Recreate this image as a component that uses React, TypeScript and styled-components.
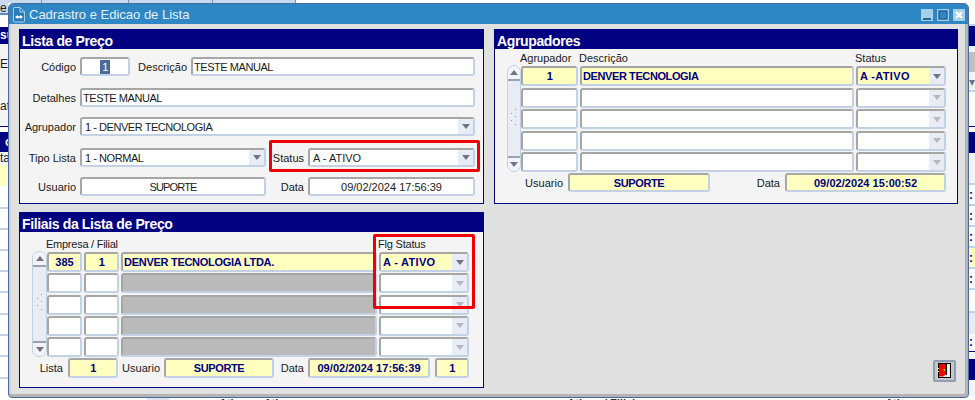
import React from "react";
import styled, { createGlobalStyle } from "styled-components";

const Global = createGlobalStyle`
  html, body { margin: 0; padding: 0; background: #fff; }
  * { box-sizing: border-box; }
`;

const Desktop = styled.div`
  position: relative;
  width: 975px;
  height: 400px;
  overflow: hidden;
  display: flex;
  flex-direction: column;
  background: #fff;
  font-family: "Liberation Sans", Arial, sans-serif;
  font-size: 11px;
  color: #1a1a1a;
`;
const TopTabs = styled.div`
  height: 3px;
  display: flex;
  flex: none;
`;
const TopTab = styled.div<{ $w: number }>`
  width: ${(p) => p.$w}px;
  background: #c8daf0;
  border-right: 1px solid #7f8fa5;
`;
const Middle = styled.div`
  flex: 1;
  display: flex;
  justify-content: space-between;
  min-height: 0;
`;
const Strip = styled.div<{ $w: number }>`
  width: ${(p) => p.$w}px;
  overflow: hidden;
  display: flex;
  flex-direction: column;
`;
const Band = styled.div<{ $h: number; $bg?: string; $c?: string; $bold?: boolean; $line?: boolean; $pad?: number }>`
  flex: none;
  height: ${(p) => p.$h}px;
  background: ${(p) => p.$bg || "#fff"};
  color: ${(p) => p.$c || "#1a1a1a"};
  font-weight: ${(p) => (p.$bold ? 700 : 400)};
  font-size: 12px;
  line-height: ${(p) => p.$h}px;
  white-space: nowrap;
  overflow: hidden;
  padding-left: ${(p) => p.$pad || 0}px;
  border-bottom: ${(p) => (p.$line ? "2px solid #c3d3e6" : "none")};
`;
const StripText = styled.div<{ $mt: number }>`
  margin-top: ${(p) => p.$mt}px;
  line-height: 14px;
`;
const BottomRow = styled.div`
  height: 3px;
  flex: none;
  overflow: hidden;
  display: flex;
  background: #fff;
`;
const BottomCell = styled.span`
  margin-left: 147px;
  width: 22px;
  background: #dce6f2;
`;
const BottomBit = styled.span<{ $ml: number }>`
  margin-left: ${(p) => p.$ml}px;
  font-size: 11px;
  line-height: 13px;
  font-weight: 700;
  white-space: nowrap;
  color: #333;
`;

const Win = styled.div`
  position: absolute;
  left: 8px;
  top: 3px;
  width: 961px;
  height: 395px;
  background: #e0e0e0;
  border: 1px solid #4a6a9c;
  border-radius: 5px 5px 4px 4px;
  box-shadow: inset -3px -3px 0 #b4b4b4, inset 2px 0 0 #cfcfcf;
  display: flex;
  flex-direction: column;
`;
const TitleBar = styled.div`
  height: 20px;
  flex: none;
  background: #2e86c5;
  border-radius: 4px 4px 0 0;
  display: flex;
  align-items: center;
  padding: 0 3px 0 3px;
  color: #e6f0f8;
  font-size: 13px;
`;
const TitleText = styled.span`
  margin-left: 3px;
  flex: 1;
`;
const WinBtns = styled.div`
  display: flex;
  gap: 4px;
  margin-top: 2px;
`;
const WinBtn = styled.div`
  width: 12px;
  height: 12px;
  background: #a6cfea;
`;
const Content = styled.div`
  flex: 1;
  display: grid;
  grid-template-columns: 465px 464px;
  column-gap: 10px;
  padding: 5px 0 0 10px;
  align-items: start;
`;
const Col = styled.div`
  display: flex;
  flex-direction: column;
  gap: 8px;
`;
const RightCol = styled(Col)`
  height: 358px;
  gap: 0;
`;
const Panel = styled.section<{ $h: number }>`
  position: relative;
  height: ${(p) => p.$h}px;
  flex: none;
  border: 1px solid #000080;
  background: #f4f4f4;
  display: flex;
  flex-direction: column;
`;
const PanelTitle = styled.h2`
  margin: 0;
  height: 19px;
  flex: none;
  background: #000080;
  color: #fff;
  font-size: 14px;
  font-weight: 700;
  line-height: 22px;
  letter-spacing: -0.36px;
  padding-left: 2px;
  overflow: hidden;
`;
const FormBody = styled.div`
  padding: 8px 8px 0 0;
  display: flex;
  flex-direction: column;
`;
const FormRow = styled.div<{ $mt?: number }>`
  display: flex;
  align-items: center;
  margin-top: ${(p) => p.$mt || 0}px;
`;
const Label = styled.span<{ $w: number; $gap?: number }>`
  flex: none;
  width: ${(p) => p.$w}px;
  margin-right: ${(p) => p.$gap ?? 4}px;
  text-align: right;
  white-space: nowrap;
`;
const Field = styled.div<{ $w?: number; $h?: number; $yellow?: boolean; $center?: boolean; $bold?: boolean; $gray?: boolean; $ls?: number }>`
  ${(p) => (p.$w ? `width: ${p.$w}px; flex: none;` : "flex: 1; min-width: 0;")}
  height: ${(p) => p.$h || 19}px;
  border: 2px solid;
  border-color: #a6a6a6 #c3d1e4 #c3d1e4 #a6a6a6;
  border-radius: 3px;
  background: ${(p) => (p.$gray ? "#bababa" : p.$yellow ? "#ffffc0" : "#fff")};
  display: flex;
  align-items: center;
  justify-content: ${(p) => (p.$center ? "center" : "flex-start")};
  padding: 0 ${(p) => (p.$center ? 0 : 1)}px;
  color: ${(p) => (p.$bold ? "#000080" : "#1a1a1a")};
  font-weight: ${(p) => (p.$bold ? 700 : 400)};
  letter-spacing: ${(p) => p.$ls ?? (p.$bold ? -0.4 : -0.45)}px;
  white-space: nowrap;
  overflow: hidden;
`;
const Selected = styled.span`
  background: #4a6a9c;
  color: #fff;
  padding: 0 2px;
  line-height: 14px;
`;
const SelValue = styled.span<{ $pl?: number }>`
  flex: 1;
  padding-left: ${(p) => p.$pl || 0}px;
`;
const ArrowBtn = styled.span`
  flex: none;
  align-self: stretch;
  width: 15px;
  margin-right: -1px;
  background: #e8ecf4;
  display: flex;
  align-items: center;
  justify-content: center;
`;
const Tri = styled.span<{ $up?: boolean; $dim?: boolean }>`
  width: 0;
  height: 0;
  border-left: 4px solid transparent;
  border-right: 4px solid transparent;
  ${(p) => (p.$up ? "border-bottom" : "border-top")}: 5px solid ${(p) => (p.$dim ? "#b6b8bc" : "#6f7480")};
`;
const RedBox = styled.div<{ $l: number; $t: number; $w: number; $h: number }>`
  position: absolute;
  left: ${(p) => p.$l}px;
  top: ${(p) => p.$t}px;
  width: ${(p) => p.$w}px;
  height: ${(p) => p.$h}px;
  border: 3px solid #f00000;
  border-radius: 2px;
  pointer-events: none;
`;
const Table = styled.div<{ $cols: string; $gap: number; $ml: number; $head: number }>`
  display: grid;
  grid-template-columns: ${(p) => p.$cols};
  grid-template-rows: ${(p) => p.$head}px repeat(5, 20px);
  column-gap: 2px;
  row-gap: ${(p) => p.$gap}px;
  margin-left: ${(p) => p.$ml}px;
`;
const Head = styled.div<{ $span?: number; $col: number; $ls?: number }>`
  grid-column: ${(p) => p.$col} / span ${(p) => p.$span || 1};
  align-self: end;
  line-height: 13px;
  white-space: nowrap;
  margin-left: -1px;
  letter-spacing: ${(p) => p.$ls ?? 0}px;
  color: #1a1a1a;
`;
const Scroll = styled.div`
  grid-column: 1;
  grid-row: 2 / span 5;
  margin: -1px -2px 0 0;
  border: 1px solid #c3d1e4;
  border-radius: 7px;
  background: #e8edf5;
  display: flex;
  flex-direction: column;
  align-items: center;
  justify-content: space-between;
`;
const ScrollEnd = styled.div<{ $top?: boolean }>`
  align-self: stretch;
  height: 15px;
  display: flex;
  align-items: center;
  justify-content: center;
  ${(p) => (p.$top ? "border-bottom" : "border-top")}: 2px solid #9aa3b0;
  background: #f0f3f8;
  border-radius: ${(p) => (p.$top ? "6px 6px 0 0" : "0 0 6px 6px")};
`;
const Footer = styled.div<{ $mt: number }>`
  display: flex;
  align-items: center;
  margin-top: ${(p) => p.$mt}px;
`;
const ExitBtn = styled.div`
  margin: auto 2px 5px auto;
  width: 23px;
  height: 22px;
  background: #c8c8c8;
  border: 2px solid;
  border-color: #8e9db2;
  border-radius: 2px;
  display: flex;
  align-items: center;
  justify-content: center;
`;

const WinIcon = () => (
  <svg width="14" height="17" viewBox="0 0 14 17" style={{ flex: "none" }}>
    <path d="M1.5 2.5 a1 1 0 0 1 1-1 H8 L12.5 6 V15 a1 1 0 0 1-1 1 H2.5 a1 1 0 0 1-1-1Z" fill="#2a7cba" stroke="#a6cfea" />
    <path d="M8 1.5 V6 H12.5" fill="none" stroke="#a6cfea" />
    <path d="M6 9 L3 11 L6 13Z M8 9 L11 11 L8 13Z" fill="#fff" />
    <path d="M6 10h2v2H6z" fill="#d8e8f4" />
  </svg>
);
const DoorIcon = () => (
  <svg width="15" height="16" viewBox="0 0 15 16">
    <rect x="1.5" y="0.5" width="12" height="14" fill="#e8e8e8" stroke="#000" />
    <path d="M2 1h7v10.500l-3 2H2z" fill="#f00000" />
    <path d="M9.500 1v11" stroke="#000" />
    <path d="M11.500 2v11" stroke="#fff" />
    <rect x="6.500" y="6" width="1.500" height="1.500" fill="#ff0" />
    <rect x="0" y="5" width="2" height="1" fill="#ff0" />
    <rect x="0" y="8" width="2" height="1" fill="#ff0" />
  </svg>
);
const MinGlyph = () => (
  <svg width="12" height="12" viewBox="0 0 12 12" style={{ display: "block" }}>
    <rect x="2" y="9" width="8" height="2" fill="#24679c" />
  </svg>
);
const MaxGlyph = () => (
  <svg width="12" height="12" viewBox="0 0 12 12" style={{ display: "block" }}>
    <rect x="2" y="2" width="8" height="8" fill="#2e86c5" stroke="#24679c" strokeWidth="1.500" />
  </svg>
);
const CloseGlyph = () => (
  <svg width="12" height="12" viewBox="0 0 12 12" style={{ display: "block" }}>
    <path d="M3 3l6 6M9 3l-6 6" stroke="#fff" strokeWidth="2.400" />
  </svg>
);
const Grip = () => (
  <svg width="10" height="20" viewBox="0 0 10 20">
    <path d="M6 1l1-1M2 5l1-1M6 8l1-1M2 12l1-1M6 16l1-1" stroke="#8a94a4" strokeWidth="1" fill="none" />
  </svg>
);
const ScrollBar = () => (
  <Scroll>
    <ScrollEnd $top>
      <Tri $up />
    </ScrollEnd>
    <Grip />
    <ScrollEnd>
      <Tri />
    </ScrollEnd>
  </Scroll>
);

const Select = ({ children, w, h, yellow, bold, dim, pl, ls }: { children?: React.ReactNode; w?: number; h?: number; yellow?: boolean; bold?: boolean; dim?: boolean; pl?: number; ls?: number }) => (
  <Field $w={w} $h={h} $yellow={yellow} $bold={bold} $ls={ls}>
    <SelValue $pl={pl}>{children}</SelValue>
    <ArrowBtn>
      <Tri $dim={dim} />
    </ArrowBtn>
  </Field>
);

const LeftBands = () => (
  <>
    <Band $h={10} $bg="#c8daf0">e</Band>
    <Band $h={2} $bg="#5d8dc0" />
    <Band $h={12} />
    <Band $h={17} $bg="#000080" $c="#fff" $bold>su</Band>
    <Band $h={82} $bg="#f4f4f4">
      <StripText $mt={13}>Er</StripText>
      <StripText $mt={28}>at</StripText>
    </Band>
    <Band $h={1} $bg="#000080" />
    <Band $h={5} />
    <Band $h={20} $bg="#000080" $c="#fff" $bold $pad={5}>c</Band>
    <Band $h={13} $bg="#f4f4f4">ta</Band>
    <Band $h={21} $bg="#ffffc0" />
    {[23, 21, 21, 21, 21, 22, 21, 21, 22].map((h, i) => (
      <Band key={i} $h={h} $line />
    ))}
  </>
);
const Tick = ({ h, bg }: { h: number; bg?: string }) => (
  <Band $h={h} $bg={bg} $c="#000080" $bold $line>
    :
  </Band>
);
const RightBands = () => (
  <>
    <Band $h={15} />
    <Band $h={8} $bg="#fff" $line />
    <Band $h={20} $bg="#000080" />
    <Band $h={6} $bg="#f4f4f4" />
    <Band $h={20} $bg="#c0c0c0" />
    <Band $h={20} $bg="#f4f4f4" $line $c="#6f7480">▾</Band>
    <Band $h={34} />
    <Band $h={1} $bg="#000080" />
    <Band $h={5} />
    <Band $h={21} $bg="#000080" />
    <Band $h={32} $bg="#f4f4f4" $line />
    <Tick h={21} />
    <Tick h={21} />
    <Tick h={21} />
    <Tick h={21} bg="#ffffc0" />
    <Tick h={21} />
    <Band $h={23} $line />
    <Band $h={21} $bg="#e8ecf4" />
    <Band $h={17} $c="#000080" $bold>:</Band>
    <Band $h={1} $bg="#000080" />
    <Band $h={7} />
    <Band $h={21} $bg="#000080" />
    <Band $h={20} $bg="#f4f4f4" />
  </>
);

const agRows = [0, 1, 2, 3, 4];

export default function App() {
  return (
    <>
      <Global />
      <Desktop>
        <TopTabs>
          <TopTab $w={42} />
          <TopTab $w={87} />
          <TopTab $w={84} />
          <TopTab $w={83} />
        </TopTabs>
        <Middle>
          <Strip $w={8}>
            <LeftBands />
          </Strip>
          <Strip $w={6}>
            <RightBands />
          </Strip>
        </Middle>
        <BottomRow>
          <BottomCell />
          <BottomBit $ml={50}>Ati</BottomBit>
          <BottomBit $ml={30}>Ativos</BottomBit>
          <BottomBit $ml={270}>Ativos / Filial</BottomBit>
          <BottomBit $ml={250}>Ativos</BottomBit>
        </BottomRow>

        <Win>
          <TitleBar>
            <WinIcon />
            <TitleText>Cadrastro e Edicao de Lista</TitleText>
            <WinBtns>
              <WinBtn><MinGlyph /></WinBtn>
              <WinBtn><MaxGlyph /></WinBtn>
              <WinBtn><CloseGlyph /></WinBtn>
            </WinBtns>
          </TitleBar>
          <Content>
            <Col>
              <Panel $h={175}>
                <PanelTitle>Lista de Preço</PanelTitle>
                <FormBody>
                  <FormRow>
                    <Label $w={56}>Código</Label>
                    <Field $w={50} $center><Selected>1</Selected></Field>
                    <Label $w={57}>Descrição</Label>
                    <Field>TESTE MANUAL</Field>
                  </FormRow>
                  <FormRow $mt={12}>
                    <Label $w={56}>Detalhes</Label>
                    <Field>TESTE MANUAL</Field>
                  </FormRow>
                  <FormRow $mt={10}>
                    <Label $w={56}>Agrupador</Label>
                    <Select pl={2}>1 - DENVER TECNOLOGIA</Select>
                  </FormRow>
                  <FormRow $mt={12}>
                    <Label $w={56}>Tipo Lista</Label>
                    <Select w={186} pl={2}>1 - NORMAL</Select>
                    <Label $w={38}>Status</Label>
                    <Select pl={2} ls={0}>A - ATIVO</Select>
                  </FormRow>
                  <FormRow $mt={10}>
                    <Label $w={56}>Usuario</Label>
                    <Field $w={186} $center $ls={-0.85}>SUPORTE</Field>
                    <Label $w={38}>Data</Label>
                    <Field $center $ls={0}>09/02/2024 17:56:39</Field>
                  </FormRow>
                </FormBody>
                <RedBox $l={249} $t={110} $w={211} $h={32} />
              </Panel>

              <Panel $h={176}>
                <PanelTitle>Filiais da Lista de Preço</PanelTitle>
                <Table $cols="13px 35px 35px 256px 90px" $gap={1.25} $ml={12} $head={18.75}>
                  <Head $col={2} $span={3} $ls={-0.25}>Empresa / Filial</Head>
                  <Head $col={5} $ls={-0.2}>Flg Status</Head>
                  <ScrollBar />
                  {agRows.map((r) => (
                    <React.Fragment key={r}>
                      <Field $h={20} $center $yellow={r === 0} $bold $ls={0}>{r === 0 ? "385" : ""}</Field>
                      <Field $h={20} $center $yellow={r === 0} $bold>{r === 0 ? "1" : ""}</Field>
                      {r === 0 ? (
                        <Field $h={20} $yellow $bold $ls={-0.28}>DENVER TECNOLOGIA LTDA.</Field>
                      ) : (
                        <Field $h={20} $gray />
                      )}
                      <Select h={20} yellow={r === 0} bold dim={r !== 0} pl={1} ls={0.3}>{r === 0 ? "A - ATIVO" : ""}</Select>
                    </React.Fragment>
                  ))}
                </Table>
                <Footer $mt={1}>
                  <Label $w={43} $gap={5}>Lista</Label>
                  <Field $w={50} $h={20} $yellow $center $bold>1</Field>
                  <Label $w={42}>Usuario</Label>
                  <Field $w={110} $h={20} $yellow $center $bold>SUPORTE</Field>
                  <Label $w={30}>Data</Label>
                  <Field $w={122} $h={20} $yellow $center $bold $ls={0.05}>09/02/2024 17:56:39</Field>
                  <Label $w={1} />
                  <Field $w={34} $h={20} $yellow $center $bold>1</Field>
                </Footer>
                <RedBox $l={353} $t={21} $w={102} $h={75} />
              </Panel>
            </Col>

            <RightCol>
              <Panel $h={175}>
                <PanelTitle>Agrupadores</PanelTitle>
                <Table $cols="12px 57px 274px 90px" $gap={1.5} $ml={12} $head={15.5}>
                  <Head $col={2}>Agrupador</Head>
                  <Head $col={3}>Descrição</Head>
                  <Head $col={4}>Status</Head>
                  <ScrollBar />
                  {agRows.map((r) => (
                    <React.Fragment key={r}>
                      <Field $h={20} $center $yellow={r === 0} $bold>{r === 0 ? "1" : ""}</Field>
                      <Field $h={20} $yellow={r === 0} $bold>{r === 0 ? "DENVER TECNOLOGIA" : ""}</Field>
                      <Select h={20} yellow={r === 0} bold dim={r !== 0} pl={1} ls={0.35}>{r === 0 ? "A -ATIVO" : ""}</Select>
                    </React.Fragment>
                  ))}
                </Table>
                <Footer $mt={1}>
                  <Label $w={68} $gap={5}>Usuario</Label>
                  <Field $w={142} $yellow $center $bold>SUPORTE</Field>
                  <Label $w={70} $gap={5}>Data</Label>
                  <Field $w={161} $yellow $center $bold $ls={0.05}>09/02/2024 15:00:52</Field>
                </Footer>
              </Panel>
              <ExitBtn><DoorIcon /></ExitBtn>
            </RightCol>
          </Content>
        </Win>
      </Desktop>
    </>
  );
}
